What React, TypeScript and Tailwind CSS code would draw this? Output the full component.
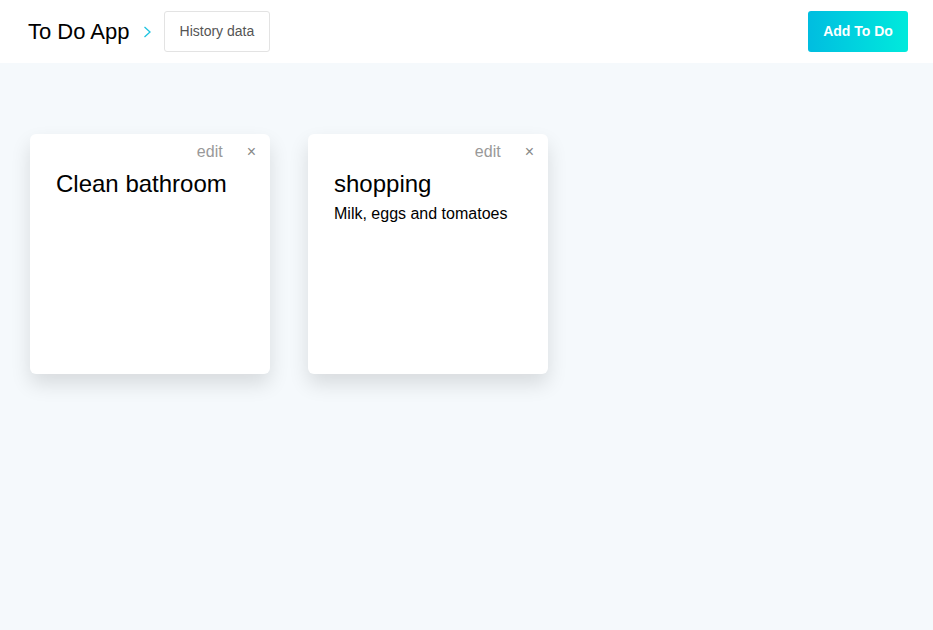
const todos = [
  { id: 1, title: "Clean bathroom", body: "" },
  { id: 2, title: "shopping", body: "Milk, eggs and tomatoes" },
];

function TodoCard({ title, body }: { title: string; body: string }) {
  return (
    <div className="w-[240px] h-[240px] bg-white rounded-[6px] shadow-[0_10px_20px_rgba(0,0,0,0.12)]">
      <div className="flex justify-end items-center gap-[24px] pt-[4px] pr-[14px] h-[32px]">
        <span className="text-[16px] text-[#999]">edit</span>
        <span className="text-[16px] text-[#888] leading-none">×</span>
      </div>
      <div className="px-[26px] pt-[2px]">
        <h2 className="text-[24px] leading-[32px] text-black">{title}</h2>
        {body && <p className="text-[16px] leading-[26px] mt-[1px] text-black">{body}</p>}
      </div>
    </div>
  );
}

export default function App() {
  return (
    <div className="min-h-[630px] bg-[#f5f9fc] font-['Liberation_Sans',Arial,sans-serif]">
      <header className="h-[63px] bg-white flex items-center justify-between pl-[28px] pr-[25px]">
        <div className="flex items-center">
          <span className="text-[22px] text-black">To Do App</span>
          <svg className="ml-[13px]" width="9" height="12" viewBox="0 0 9 12" fill="none">
            <polyline points="1.5,1 7,6 1.5,11" stroke="#1ec3e0" strokeWidth="1.3" />
          </svg>
          <button className="ml-[12px] h-[41px] px-[15px] border border-[#e3e3e3] rounded-[3px] text-[14px] text-[#555] bg-white">
            History data
          </button>
        </div>
        <button className="h-[41px] w-[100px] rounded-[3px] text-[14px] font-bold text-white bg-gradient-to-r from-[#00bde0] to-[#00eadc]">
          Add To Do
        </button>
      </header>
      <main className="flex gap-[38px] px-[30px] pt-[71px]">
        {todos.map((t) => (
          <TodoCard key={t.id} title={t.title} body={t.body} />
        ))}
      </main>
    </div>
  );
}
